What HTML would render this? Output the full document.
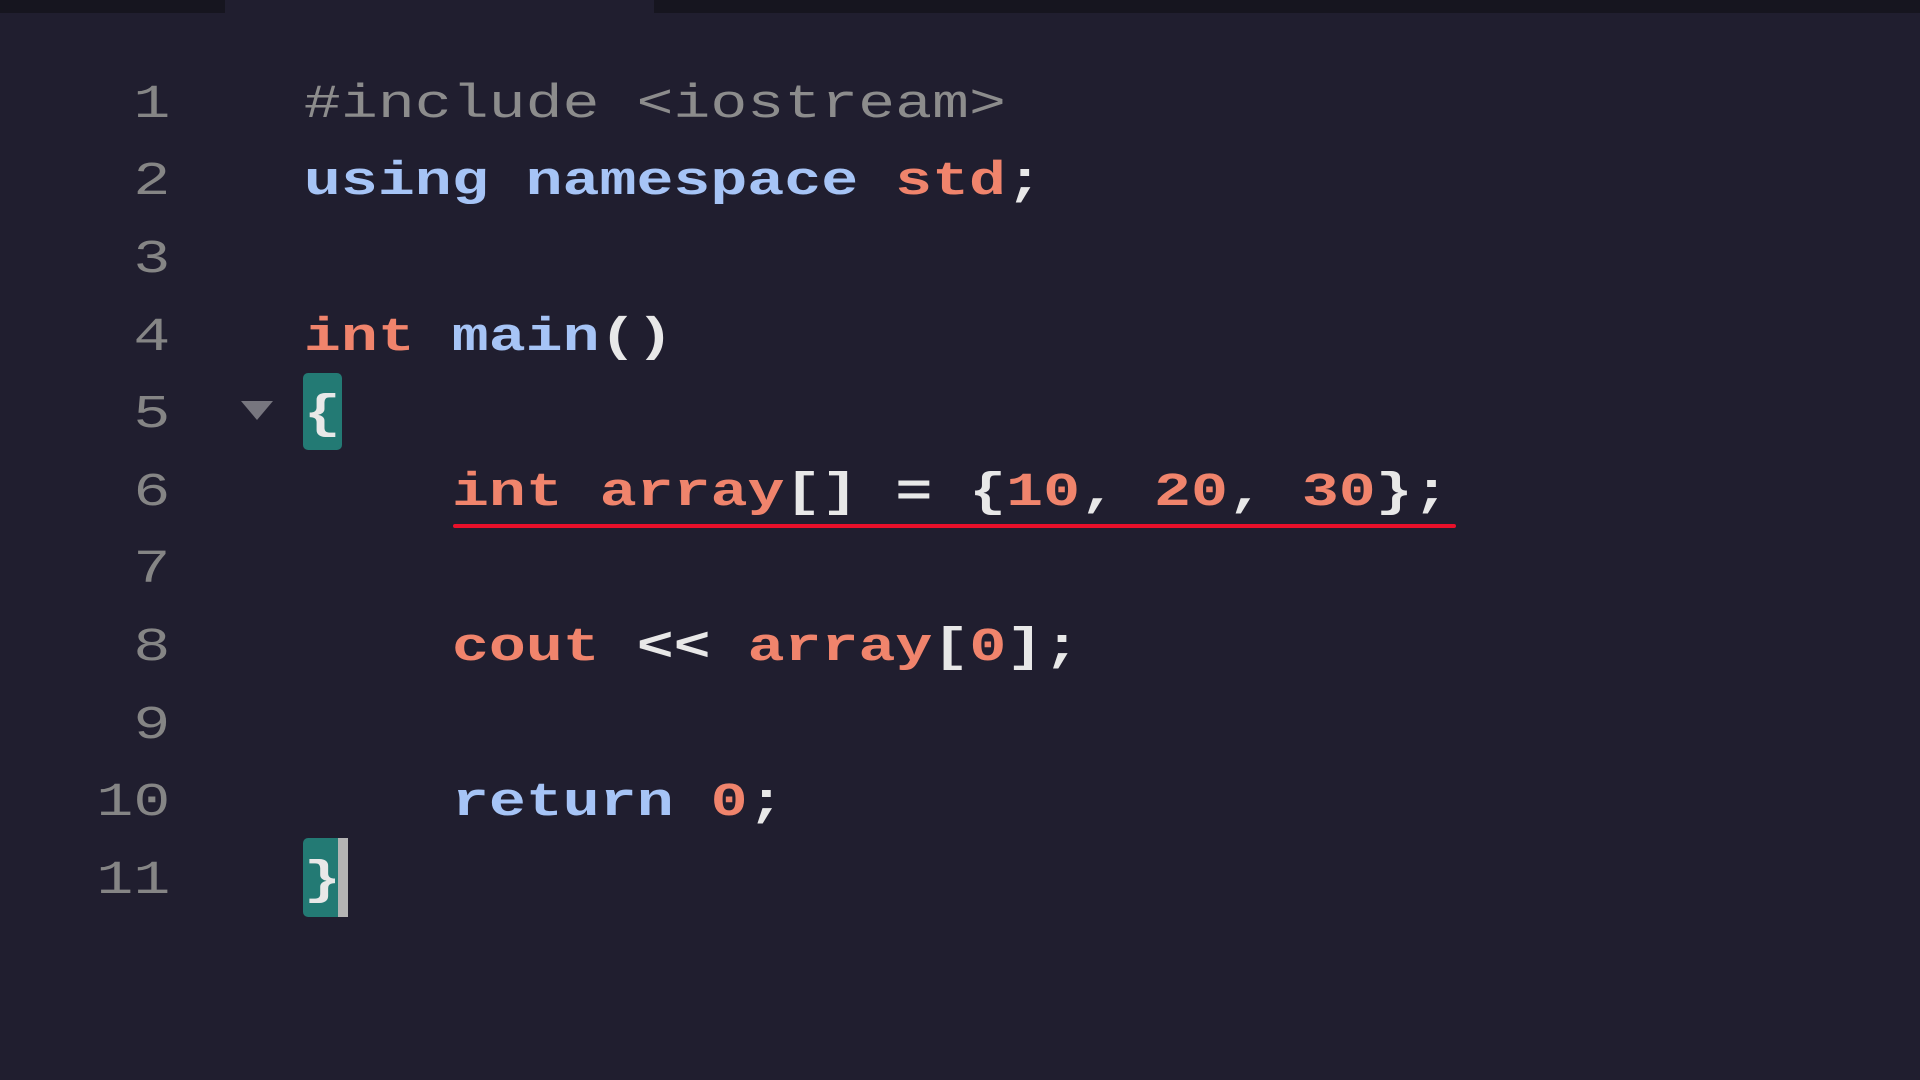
<!DOCTYPE html>
<html><head><meta charset="utf-8"><style>
html,body{margin:0;padding:0;}
body{width:1920px;height:1080px;background:#201e2f;overflow:hidden;position:relative;font-family:"Liberation Mono",monospace;}
.strip{position:absolute;left:0;top:0;width:1920px;height:13px;background:#16151f;}
.tab{position:absolute;left:225px;top:0;width:429px;height:13px;background:#201e2f;}
.code{position:absolute;left:0;top:4px;transform:scaleX(1.31);transform-origin:0 0;}
.ln{position:absolute;font-size:47px;line-height:77.6px;height:77.6px;white-space:pre;font-weight:bold;}
.num{position:absolute;width:130px;text-align:right;left:0;font-size:47px;line-height:77.6px;color:#858585;white-space:pre;}
.c{color:#8c8c8c;font-weight:normal}
.b{color:#a6c4f6}
.s{color:#f0846c}
.w{color:#e8e8e8}
.box{position:absolute;background:#237a74;border-radius:5px;}
</style></head><body>
<div class="strip"></div><div class="tab"></div>
<div class="box" style="left:303px;top:373px;width:39px;height:77px;"></div>
<div class="box" style="left:303px;top:838px;width:38px;height:79px;border-radius:5px 0 0 5px;"></div>
<div style="position:absolute;left:338px;top:838px;width:10px;height:79px;background:#b4b4b4;"></div>
<div style="position:absolute;left:241px;top:401px;width:0;height:0;border-left:16px solid transparent;border-right:16px solid transparent;border-top:19px solid #77767f;"></div>
<div style="position:absolute;left:453px;top:524px;width:1003px;height:4px;background:#e8102a;border-radius:2px;"></div>
<div class="code">
<div class="num" style="top:62.8px">1</div>
<div class="num" style="top:140.4px">2</div>
<div class="num" style="top:218px">3</div>
<div class="num" style="top:295.6px">4</div>
<div class="num" style="top:373.2px">5</div>
<div class="num" style="top:450.8px">6</div>
<div class="num" style="top:528.4px">7</div>
<div class="num" style="top:606px">8</div>
<div class="num" style="top:683.6px">9</div>
<div class="num" style="top:761.2px">10</div>
<div class="num" style="top:838.8px">11</div>
<div class="ln c" style="left:232px;top:62.8px">#include &lt;iostream&gt;</div>
<div class="ln" style="left:232px;top:140.4px"><span class="b">using namespace</span> <span class="s">std</span><span class="w">;</span></div>
<div class="ln" style="left:232px;top:295.6px"><span class="s">int</span> <span class="b">main</span><span class="w">()</span></div>
<div class="ln w" style="left:232px;top:373.2px">{</div>
<div class="ln" style="left:345px;top:450.8px"><span class="s">int array</span><span class="w">[] = {</span><span class="s">10</span><span class="w">, </span><span class="s">20</span><span class="w">, </span><span class="s">30</span><span class="w">};</span></div>
<div class="ln" style="left:345px;top:606px"><span class="s">cout</span> <span class="w">&lt;&lt;</span> <span class="s">array</span><span class="w">[</span><span class="s">0</span><span class="w">];</span></div>
<div class="ln" style="left:345px;top:761.2px"><span class="b">return</span> <span class="s">0</span><span class="w">;</span></div>
<div class="ln w" style="left:232px;top:838.8px">}</div>
</div>
</body></html>
